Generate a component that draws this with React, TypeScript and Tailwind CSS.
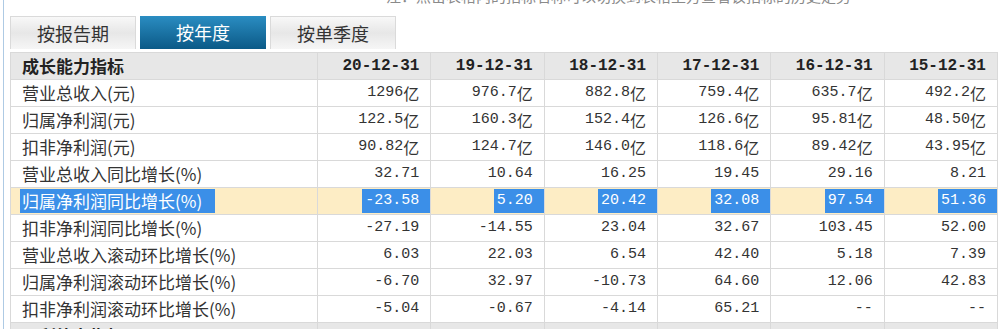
import React from 'react';

const sans = { fontFamily: '"Noto Sans CJK SC", "Noto Sans", sans-serif' };
const mono = { fontFamily: '"Liberation Mono", "Noto Sans CJK SC", monospace' };

const dates = ['20-12-31', '19-12-31', '18-12-31', '17-12-31', '16-12-31', '15-12-31'];

const rows: { label: string; values: string[]; hot?: boolean }[] = [
  { label: '营业总收入(元)', values: ['1296亿', '976.7亿', '882.8亿', '759.4亿', '635.7亿', '492.2亿'] },
  { label: '归属净利润(元)', values: ['122.5亿', '160.3亿', '152.4亿', '126.6亿', '95.81亿', '48.50亿'] },
  { label: '扣非净利润(元)', values: ['90.82亿', '124.7亿', '146.0亿', '118.6亿', '89.42亿', '43.95亿'] },
  { label: '营业总收入同比增长(%)', values: ['32.71', '10.64', '16.25', '19.45', '29.16', '8.21'] },
  { label: '归属净利润同比增长(%)', values: ['-23.58', '5.20', '20.42', '32.08', '97.54', '51.36'], hot: true },
  { label: '扣非净利润同比增长(%)', values: ['-27.19', '-14.55', '23.04', '32.67', '103.45', '52.00'] },
  { label: '营业总收入滚动环比增长(%)', values: ['6.03', '22.03', '6.54', '42.40', '5.18', '7.39'] },
  { label: '归属净利润滚动环比增长(%)', values: ['-6.70', '32.97', '-10.73', '64.60', '12.06', '42.83'] },
  { label: '扣非净利润滚动环比增长(%)', values: ['-5.04', '-0.67', '-4.14', '65.21', '--', '--'] },
];

function Num({ v }: { v: string }) {
  const yi = v.endsWith('亿');
  const n = yi ? v.slice(0, -1) : v;
  return (
    <>
      <span style={mono} className="text-[15px]">{n}</span>
      {yi && <span style={sans} className="text-[16px]">亿</span>}
    </>
  );
}

function Tab({ label, active }: { label: string; active?: boolean }) {
  return (
    <div
      style={sans}
      className={
        active
          ? 'flex h-[33px] w-[126px] items-center justify-center bg-gradient-to-b from-[#2a8dc2] to-[#0a5a87] text-[18px] text-white'
          : 'flex h-[33px] w-[126px] items-center justify-center border border-b-0 border-[#dadada] bg-gradient-to-b from-[#f8f8f8] via-[#e7e7e7] to-[#f6f6f6] text-[18px] text-[#333]'
      }
    >
      {label}
    </div>
  );
}

export default function App() {
  return (
    <div className="h-[329px] w-[1006px] overflow-hidden bg-white pl-[3px]">
      <div className="h-full border-l border-[#aecae4] pl-[6px]">
        {/* note above the tabs, mostly scrolled off the top */}
        <div className="h-[16px] overflow-hidden pl-[376px]">
          <p style={sans} className="-mt-[13px] text-[15px] leading-[18px] text-[#8a8a8a]">
            注：点击表格内的指标名称可以切换到表格上方查看该指标的历史走势
          </p>
        </div>

        <div className="flex gap-[4px]">
          <Tab label="按报告期" />
          <Tab label="按年度" active />
          <Tab label="按单季度" />
        </div>

        <div className="mt-[3px] w-[988px] border-l border-t border-[#d9d9d9]">
          <div className="flex h-[27px] border-b border-[#d9d9d9] bg-[#e7e7e7] text-[#222]">
            <div style={sans} className="flex w-[307px] shrink-0 items-center border-r border-[#d9d9d9] pl-[11px] text-[17px] font-bold">
              成长能力指标
            </div>
            {dates.map((d) => (
              <div key={d} style={mono} className="flex flex-1 items-center justify-end border-r border-[#d9d9d9] pr-[11px] text-[16px] font-bold">
                {d}
              </div>
            ))}
          </div>

          {rows.map((r) => (
            <div
              key={r.label}
              className={`flex h-[27px] border-b border-[#d9d9d9] text-[#333] ${r.hot ? 'bg-[#fdedc5]' : 'bg-white'}`}
            >
              <div className={`flex w-[307px] shrink-0 items-stretch border-r border-[#d9d9d9] pl-[9px] ${r.hot ? 'py-px' : ''}`}>
                <span
                  style={sans}
                  className={`flex items-center pl-[2px] text-[17px] ${r.hot ? 'bg-[#3b8fe8] pr-[13px] text-white' : ''}`}
                >
                  {r.label}
                </span>
              </div>
              {r.values.map((v, i) => (
                <div
                  key={i}
                  className={`flex flex-1 items-stretch justify-end border-r border-[#d9d9d9] ${r.hot ? 'py-px' : 'pr-[11px]'}`}
                >
                  <span className={`flex items-center ${r.hot ? 'bg-[#3b8fe8] pl-[3px] pr-[11px] text-white' : ''}`}>
                    <Num v={v} />
                  </span>
                </div>
              ))}
            </div>
          ))}

          <div className="flex h-[27px] border-b border-[#d9d9d9] bg-[#e7e7e7] text-[#222]">
            <div style={sans} className="flex w-[307px] shrink-0 items-center border-r border-[#d9d9d9] pl-[11px] text-[17px] font-bold">
              盈利能力指标
            </div>
            {dates.map((d) => (
              <div key={d} className="flex-1 border-r border-[#d9d9d9]" />
            ))}
          </div>
        </div>
      </div>
    </div>
  );
}
